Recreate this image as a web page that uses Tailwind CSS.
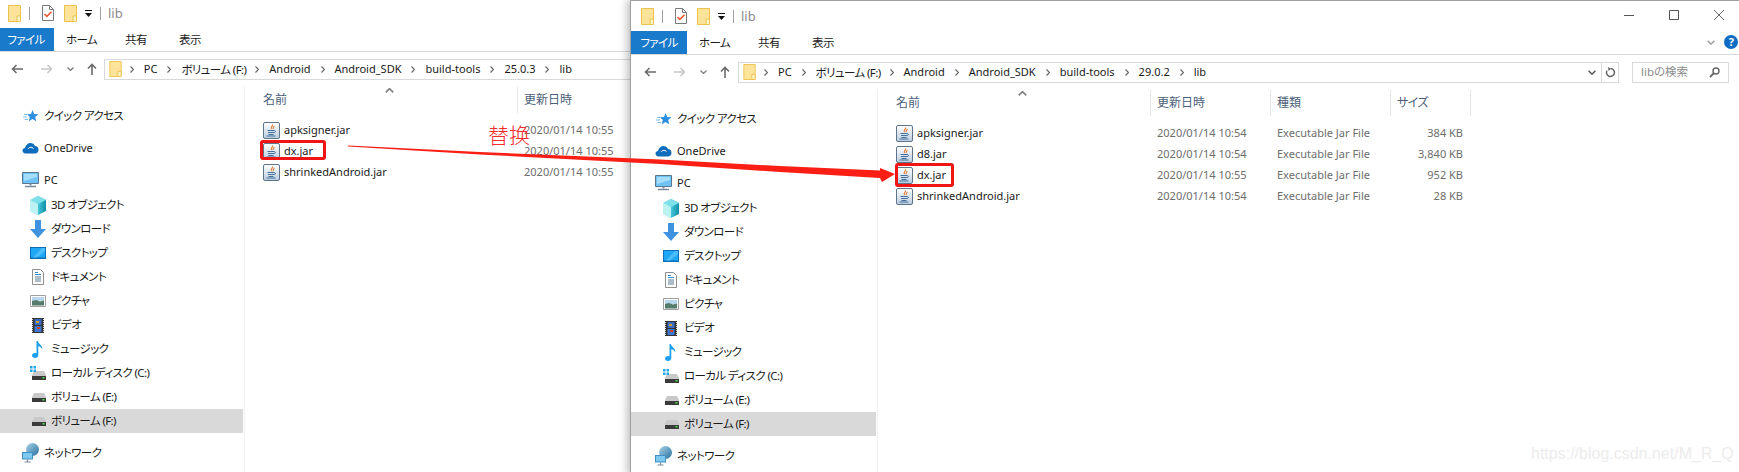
<!DOCTYPE html>
<html lang="ja">
<head>
<meta charset="UTF-8">
<title>lib</title>
<script src="https://cdn.jsdelivr.net/npm/@tailwindcss/browser@4"></script>
</head>
<body class="relative w-[1739px] h-[472px] overflow-hidden bg-white text-[11px] text-[#1a1a1a] font-['Noto_Sans','Noto_Sans_CJK_JP',sans-serif] [font-feature-settings:'palt']">

<!-- shared icons -->
<svg width="0" height="0" class="absolute">
  <defs>
    <linearGradient id="jarbg" x1="0" y1="0" x2="0" y2="1"><stop offset="0" stop-color="#ffffff"/><stop offset="1" stop-color="#b9cde0"/></linearGradient>
    <linearGradient id="cube" x1="0" y1="0" x2="1" y2="0"><stop offset="0" stop-color="#b5f0f2"/><stop offset="0.5" stop-color="#45c6d8"/><stop offset="1" stop-color="#0f8fa6"/></linearGradient>
    <linearGradient id="globe" x1="0" y1="0" x2="1" y2="1"><stop offset="0" stop-color="#a9d4ea"/><stop offset="1" stop-color="#2a6f9e"/></linearGradient>
    <symbol id="folder" viewBox="0 0 13 17"><path d="M.5.5h12v16H.5z" fill="#fde49a" stroke="#ecc24f"/><path d="M9 11h3.5v5.5H9z" fill="#fff3c9" stroke="#ecc24f"/></symbol>
    <symbol id="check" viewBox="0 0 12 16"><path d="M.5.5h7l4 4v11H.5z" fill="#fff" stroke="#7a7a7a"/><path d="M7.5.5v4h4" fill="none" stroke="#7a7a7a"/><path d="M2.5 9l2.4 2.4L9.5 6.8" fill="none" stroke="#e8562a" stroke-width="1.5"/></symbol>
    <symbol id="jar" viewBox="0 0 17 17"><rect x=".5" y=".5" width="16" height="16" rx="1.5" fill="url(#jarbg)" stroke="#5f7488"/><path d="M9.5 2.5c1 1.6-2.500 2.500-1 4.500M11 4c.6 1.200-1.800 1.600-.7 3" fill="none" stroke="#e5792a" stroke-width="1.1"/><path d="M4.500 8.500h7M5 10.500h6c1.800 0 1.800-1.800.3-1.800M5.500 12.500h5M3.500 14h9" fill="none" stroke="#45709c" stroke-width="1"/></symbol>
    <symbol id="star" viewBox="0 0 17 16"><path d="M10.500 2l1.700 4 4.300.3-3.300 2.800 1 4.200-3.700-2.300-3.700 2.300 1-4.200L5 6.300 9 6z" fill="#2d8fe0"/><path d="M1 9h4M2 6.500h3M2.500 11.500H6" stroke="#7cc0ee" stroke-width="1"/></symbol>
    <symbol id="cloud" viewBox="0 0 17 12"><path d="M3.500 11.500C1.500 11.500.5 10 .5 8.500S1.700 6 3 6c.5-3 3-5 5.500-5 2 0 3.700 1.200 4.500 3 2 0 3.500 1.700 3.500 3.700 0 2.200-1.500 3.800-3.500 3.800z" fill="#0f6cbd"/><path d="M6 6.800c1-1.300 2.500-1.800 4-1.300l1.500 1" fill="none" stroke="#fff" stroke-width="1"/></symbol>
    <symbol id="pc" viewBox="0 0 17 16"><path d="M.5.5h16v11H.5z" fill="#6ec3f4" stroke="#59768e"/><path d="M2 2h13v3L2 9z" fill="#a5defa"/><path d="M8.500 11.500v2" stroke="#7a8a98" stroke-width="2"/><path d="M3 14.500h11" stroke="#7a8a98" stroke-width="1.500"/></symbol>
    <symbol id="cube3d" viewBox="0 0 16 19"><path d="M8 0l8 4v11l-8 4-8-4V4z" fill="url(#cube)"/><path d="M8 8L0 4l8-4 8 4z" fill="#7fe0ea"/><path d="M8 8v11l-8-4V4z" fill="#bdf2f3"/></symbol>
    <symbol id="down" viewBox="0 0 16 18"><path d="M5 0h6v9h5l-8 9-8-9h5z" fill="#3f92e0"/></symbol>
    <symbol id="desk" viewBox="0 0 16 12"><path d="M0 0h16v12H0z" fill="#0c6fb8"/><path d="M1 1h14v9.500H1z" fill="#1ea7f5"/><path d="M12 1h3v3l-8 6.500H3z" fill="#4dbdf8"/></symbol>
    <symbol id="doc" viewBox="0 0 12 16"><path d="M.5.500h8l3 3v12H.5z" fill="#fff" stroke="#8f8f8f"/><path d="M3 3.500h3M3 5.500h6" stroke="#2f8ad8"/><path d="M3 8h6M3 10h6M3 12h6" stroke="#5a7c96"/></symbol>
    <symbol id="pic" viewBox="0 0 16 12"><path d="M.5.500h15v11H.5z" fill="#fff" stroke="#a0a0a0"/><path d="M2 2h12v4H2z" fill="#b8d7ee"/><path d="M2 6l4-1 4 1.500 4-1v5H2z" fill="#557b6b"/></symbol>
    <symbol id="video" viewBox="0 0 12 15"><path d="M0 0h12v15H0z" fill="#333"/><path d="M2.500 1h7v6h-7z" fill="#3d6cc4"/><path d="M2.500 8h7v6h-7z" fill="#3e78d0"/><path d="M4 3h3v2H4z" fill="#d0a030"/><path d="M5 9h3v2H5z" fill="#c84030"/><path d="M.5 1v13M11.500 1v13" stroke="#ddd" stroke-dasharray="1 1"/></symbol>
    <symbol id="music" viewBox="0 0 12 17"><path d="M4.500 0h1.300c.5 3 5 4 4.500 8.500-.5-2-2.500-3-4-3.200V14c0 1.700-1.500 3-3.300 3S0 16 0 14.500 1.500 12 3 12c.6 0 1.100.1 1.500.3z" fill="#1ea0ee"/></symbol>
    <symbol id="drive" viewBox="0 0 14 9"><path d="M2 0h10l2 4v5H0V4z" fill="#c9c9c9"/><path d="M0 5h14v4H0z" fill="#3a3a3a"/><path d="M10.500 6h2v1.500h-2z" fill="#4ee04e"/></symbol>
    <symbol id="winpart" viewBox="0 0 6 6"><path d="M0 0h2.500v2.500H0zM3.500 0H6v2.500H3.500zM0 3.500h2.500V6H0zM3.500 3.500H6V6H3.500z" fill="#1ea7e8"/></symbol>
    <symbol id="net" viewBox="0 0 17 20"><circle cx="10.500" cy="6.500" r="6.500" fill="url(#globe)"/><path d="M0 9h11v7.500H0z" fill="#3d8fc4"/><path d="M1 10h9v5.500H1z" fill="#7cc8ee"/><path d="M5.500 16.500v2M2.500 19h6" stroke="#7a8a98" stroke-width="1.2"/></symbol>
    <symbol id="back" viewBox="0 0 12 10"><path d="M12 5H1.500M5.500 1L1.500 5l4 4" fill="none" stroke="currentColor" stroke-width="1.6"/></symbol>
    <symbol id="up" viewBox="0 0 12 12"><path d="M6 12V1.500M2 5.500l4-4 4 4" fill="none" stroke="currentColor" stroke-width="1.6"/></symbol>
    <symbol id="chev" viewBox="0 0 7 4"><path d="M.5.500L3.500 3.500 6.500.500" fill="none" stroke="currentColor" stroke-width="1.3"/></symbol>
    <symbol id="crumb" viewBox="0 0 4 7"><path d="M.5.500l3 3-3 3" fill="none" stroke="#666" stroke-width="1.2"/></symbol>
    <symbol id="qdrop" viewBox="0 0 7 7"><path d="M0 0h7v1H0zM0 3h7L3.500 7z" fill="#111"/></symbol>
  </defs>
</svg>

<!-- left window, clipped by the right one -->
<section class="absolute left-[-3px] top-[-3px] w-[640px] h-[475px] flex flex-col border-l border-t border-[#a0a0a0] bg-white">
  <div class="h-[30px] flex items-center pl-[10px] shrink-0">
    <svg class="w-[13px] h-[17px]"><use href="#folder"/></svg>
    <span class="w-px h-[13px] bg-[#a0a0a0] ml-[8px] mr-[12px]"></span>
    <svg class="w-[12px] h-[16px]"><use href="#check"/></svg>
    <svg class="w-[13px] h-[17px] ml-[10px]"><use href="#folder"/></svg>
    <svg class="w-[7px] h-[7px] ml-[8px]"><use href="#qdrop"/></svg>
    <span class="w-px h-[13px] bg-[#a0a0a0] ml-[8px] mr-[7px]"></span>
    <span class="text-[#8c8c8c] text-[13px] pt-[2px]">lib</span>
  </div>
  <nav class="h-[24px] flex shrink-0 border-b border-[#d9d9d9] text-[11.5px] tracking-[-0.6px]">
    <div class="w-[56px] h-[23px] bg-[#1979ca] text-white flex items-center justify-center">ファイル</div>
    <div class="w-[55px] h-[23px] flex items-center justify-center">ホーム</div>
    <div class="w-[54px] h-[23px] flex items-center justify-center">共有</div>
    <div class="w-[54px] h-[23px] flex items-center justify-center">表示</div>
  </nav>
  <div class="h-[35px] flex items-center shrink-0 pb-px">
    <div class="w-[107px] flex items-center pl-[13px]">
      <svg class="w-[12px] h-[10px] text-[#6b6b6b]"><use href="#back"/></svg>
      <svg class="w-[12px] h-[10px] ml-[18px] text-[#c8c8c8] rotate-180"><use href="#back"/></svg>
      <svg class="w-[7px] h-[4px] ml-[14px] text-[#808080]"><use href="#chev"/></svg>
      <svg class="w-[12px] h-[12px] ml-[12px] text-[#6b6b6b]"><use href="#up"/></svg>
    </div>
    <div class="w-[540px] h-[21px] border border-[#d9d9d9] flex items-center pl-[4px] gap-[10px]">
      <svg class="w-[13px] h-[16px] mr-[-2px]"><use href="#folder"/></svg>
      <svg class="w-[4px] h-[7px]"><use href="#crumb"/></svg><span class="pt-px">PC</span>
      <svg class="w-[4px] h-[7px]"><use href="#crumb"/></svg><span class="pt-px text-[11.5px] tracking-[-0.6px] mr-[-1px]">ボリューム (F:)</span>
      <svg class="w-[4px] h-[7px]"><use href="#crumb"/></svg><span class="pt-px">Android</span>
      <svg class="w-[4px] h-[7px]"><use href="#crumb"/></svg><span class="pt-px">Android_SDK</span>
      <svg class="w-[4px] h-[7px]"><use href="#crumb"/></svg><span class="pt-px">build-tools</span>
      <svg class="w-[4px] h-[7px]"><use href="#crumb"/></svg><span class="pt-px">25.0.3</span>
      <svg class="w-[4px] h-[7px]"><use href="#crumb"/></svg><span class="pt-px">lib</span>
    </div>
  </div>
  <div class="flex-1 flex min-h-0">
    <aside class="w-[247px] shrink-0 border-r border-[#f0f0f0] pt-[17px]">
      <div class="h-[24px] flex items-center pl-[24px] gap-[5px] text-[11.5px] tracking-[-0.6px]"><svg class="w-[17px] h-[16px]"><use href="#star"/></svg>クイック アクセス</div>
      <div class="h-[24px] mt-[8px] flex items-center pl-[24px] gap-[5px]"><svg class="w-[17px] h-[12px]"><use href="#cloud"/></svg>OneDrive</div>
      <div class="h-[24px] mt-[8px] flex items-center pl-[24px] gap-[5px]"><svg class="w-[17px] h-[16px]"><use href="#pc"/></svg>PC</div>
      <div class="h-[24px] mt-px flex items-center pl-[32px] gap-[5px] text-[11.5px] tracking-[-0.6px]"><svg class="w-[16px] h-[19px]"><use href="#cube3d"/></svg>3D オブジェクト</div>
      <div class="h-[24px] flex items-center pl-[32px] gap-[5px] text-[11.5px] tracking-[-0.6px]"><svg class="w-[16px] h-[18px]"><use href="#down"/></svg>ダウンロード</div>
      <div class="h-[24px] flex items-center pl-[32px] gap-[5px] text-[11.5px] tracking-[-0.6px]"><svg class="w-[16px] h-[12px]"><use href="#desk"/></svg>デスクトップ</div>
      <div class="h-[24px] flex items-center pl-[32px] gap-[5px] text-[11.5px] tracking-[-0.6px]"><span class="w-[16px] flex justify-center"><svg class="w-[12px] h-[16px]"><use href="#doc"/></svg></span>ドキュメント</div>
      <div class="h-[24px] flex items-center pl-[32px] gap-[5px] text-[11.5px] tracking-[-0.6px]"><svg class="w-[16px] h-[12px]"><use href="#pic"/></svg>ピクチャ</div>
      <div class="h-[24px] flex items-center pl-[32px] gap-[5px] text-[11.5px] tracking-[-0.6px]"><span class="w-[16px] flex justify-center"><svg class="w-[12px] h-[15px]"><use href="#video"/></svg></span>ビデオ</div>
      <div class="h-[24px] flex items-center pl-[32px] gap-[5px] text-[11.5px] tracking-[-0.6px]"><span class="w-[16px] flex justify-center"><svg class="w-[12px] h-[17px]"><use href="#music"/></svg></span>ミュージック</div>
      <div class="h-[24px] flex items-center pl-[32px] gap-[5px] text-[11.5px] tracking-[-0.6px]"><span class="relative w-[16px] h-[14px] flex items-end justify-end"><svg class="absolute left-0 top-0 w-[6px] h-[6px]"><use href="#winpart"/></svg><svg class="w-[14px] h-[9px]"><use href="#drive"/></svg></span>ローカル ディスク (C:)</div>
      <div class="h-[24px] flex items-center pl-[32px] gap-[5px] text-[11.5px] tracking-[-0.6px]"><span class="w-[16px] flex justify-end"><svg class="w-[14px] h-[9px]"><use href="#drive"/></svg></span>ボリューム (E:)</div>
      <div class="h-[24px] w-[245px] bg-[#d9d9d9] flex items-center pl-[32px] gap-[5px] text-[11.5px] tracking-[-0.6px]"><span class="w-[16px] flex justify-end"><svg class="w-[14px] h-[9px]"><use href="#drive"/></svg></span>ボリューム (F:)</div>
      <div class="h-[24px] mt-[8px] flex items-center pl-[24px] gap-[5px] text-[11.5px] tracking-[-0.6px]"><svg class="w-[17px] h-[20px]"><use href="#net"/></svg>ネットワーク</div>
    </aside>
    <div class="flex-1 min-w-0">
      <div class="relative h-[26px] grid grid-cols-[273px_120px] text-[#4c607a] text-[12px]">
        <svg class="absolute left-[140px] top-[1px] w-[9px] h-[5px] text-[#808080] rotate-180"><use href="#chev"/></svg>
        <div class="flex items-center pl-[18px] border-r border-[#e5e5e5]">名前</div>
        <div class="flex items-center pl-[6px]">更新日時</div>
      </div>
      <div class="pt-[7px] text-[#6d6d6d]">
        <div class="h-[21px] grid grid-cols-[273px_120px] items-center"><div class="flex items-center gap-[4px] pl-[18px] text-[#1a1a1a]"><svg class="w-[17px] h-[17px]"><use href="#jar"/></svg>apksigner.jar</div><div class="pl-[6px]">2020/01/14 10:55</div></div>
        <div class="h-[21px] grid grid-cols-[273px_120px] items-center"><div class="flex items-center gap-[4px] pl-[18px] text-[#1a1a1a]"><svg class="w-[17px] h-[17px]"><use href="#jar"/></svg>dx.jar</div><div class="pl-[6px]">2020/01/14 10:55</div></div>
        <div class="h-[21px] grid grid-cols-[273px_120px] items-center"><div class="flex items-center gap-[4px] pl-[18px] text-[#1a1a1a]"><svg class="w-[17px] h-[17px]"><use href="#jar"/></svg>shrinkedAndroid.jar</div><div class="pl-[6px]">2020/01/14 10:55</div></div>
      </div>
    </div>
  </div>
</section>

<!-- right window -->
<section class="absolute left-[630px] top-0 w-[1109px] h-[475px] flex flex-col border-l border-t border-[#a0a0a0] bg-white shadow-[-3px_0_8px_rgba(0,0,0,0.25)]">
  <div class="relative h-[30px] flex items-center pl-[10px] shrink-0">
    <svg class="w-[13px] h-[17px]"><use href="#folder"/></svg>
    <span class="w-px h-[13px] bg-[#a0a0a0] ml-[8px] mr-[12px]"></span>
    <svg class="w-[12px] h-[16px]"><use href="#check"/></svg>
    <svg class="w-[13px] h-[17px] ml-[10px]"><use href="#folder"/></svg>
    <svg class="w-[7px] h-[7px] ml-[8px]"><use href="#qdrop"/></svg>
    <span class="w-px h-[13px] bg-[#a0a0a0] ml-[8px] mr-[7px]"></span>
    <span class="text-[#8c8c8c] text-[13px] pt-[2px]">lib</span>
    <div class="absolute right-[15px] top-[9px] flex items-center gap-[35px] text-[#555]">
      <svg class="w-[10px] h-[10px]" viewBox="0 0 10 10"><path d="M0 5.500h10" stroke="currentColor"/></svg>
      <svg class="w-[10px] h-[10px]" viewBox="0 0 10 10"><path d="M.5.500h9v9h-9z" fill="none" stroke="currentColor"/></svg>
      <svg class="w-[10px] h-[10px]" viewBox="0 0 10 10"><path d="M0 0l10 10M10 0L0 10" stroke="currentColor" stroke-width=".9"/></svg>
    </div>
  </div>
  <nav class="relative h-[24px] flex shrink-0 border-b border-[#d9d9d9] text-[11.5px] tracking-[-0.6px]">
    <div class="w-[56px] h-[23px] bg-[#1979ca] text-white flex items-center justify-center">ファイル</div>
    <div class="w-[55px] h-[23px] flex items-center justify-center">ホーム</div>
    <div class="w-[54px] h-[23px] flex items-center justify-center">共有</div>
    <div class="w-[54px] h-[23px] flex items-center justify-center">表示</div>
    <div class="absolute right-[1px] top-[4px] flex items-center gap-[9px]">
      <svg class="w-[8px] h-[5px] text-[#a0a0a0]"><use href="#chev"/></svg>
      <span class="w-[14px] h-[14px] rounded-full bg-[#0f6cc4] text-white text-[11px] font-bold flex items-center justify-center">?</span>
    </div>
  </nav>
  <div class="h-[35px] flex items-center shrink-0 pb-px">
    <div class="w-[107px] flex items-center pl-[13px]">
      <svg class="w-[12px] h-[10px] text-[#6b6b6b]"><use href="#back"/></svg>
      <svg class="w-[12px] h-[10px] ml-[18px] text-[#c8c8c8] rotate-180"><use href="#back"/></svg>
      <svg class="w-[7px] h-[4px] ml-[14px] text-[#808080]"><use href="#chev"/></svg>
      <svg class="w-[12px] h-[12px] ml-[12px] text-[#6b6b6b]"><use href="#up"/></svg>
    </div>
    <div class="w-[881px] h-[21px] border border-[#d9d9d9] flex items-center">
      <div class="flex-1 flex items-center pl-[4px] gap-[10px]">
        <svg class="w-[13px] h-[16px] mr-[-2px]"><use href="#folder"/></svg>
        <svg class="w-[4px] h-[7px]"><use href="#crumb"/></svg><span class="pt-px">PC</span>
        <svg class="w-[4px] h-[7px]"><use href="#crumb"/></svg><span class="pt-px text-[11.5px] tracking-[-0.6px] mr-[-1px]">ボリューム (F:)</span>
        <svg class="w-[4px] h-[7px]"><use href="#crumb"/></svg><span class="pt-px">Android</span>
        <svg class="w-[4px] h-[7px]"><use href="#crumb"/></svg><span class="pt-px">Android_SDK</span>
        <svg class="w-[4px] h-[7px]"><use href="#crumb"/></svg><span class="pt-px">build-tools</span>
        <svg class="w-[4px] h-[7px]"><use href="#crumb"/></svg><span class="pt-px">29.0.2</span>
        <svg class="w-[4px] h-[7px]"><use href="#crumb"/></svg><span class="pt-px">lib</span>
      </div>
      <svg class="w-[8px] h-[5px] mr-[5px] text-[#555]"><use href="#chev"/></svg>
      <div class="w-[17px] h-full border-l border-[#d9d9d9] flex items-center justify-center">
        <svg class="w-[11px] h-[11px]" viewBox="0 0 11 11"><path d="M5.500 1.500a4 4 0 1 1-3.500 2" fill="none" stroke="#666" stroke-width="1.5"/><path d="M3 0l3 1.700L3.500 4z" fill="#666"/></svg>
      </div>
    </div>
    <div class="w-[97px] h-[21px] ml-[13px] border border-[#d9d9d9] flex items-center justify-between pl-[8px] pr-[8px] text-[#8c8c8c] text-[11.5px]">
      <span>libの検索</span>
      <svg class="w-[11px] h-[11px]" viewBox="0 0 11 11"><circle cx="7" cy="4" r="3" fill="none" stroke="#666" stroke-width="1.4"/><path d="M5 6l-4 4" stroke="#666" stroke-width="1.8"/></svg>
    </div>
  </div>
  <div class="flex-1 flex min-h-0">
    <aside class="w-[247px] shrink-0 border-r border-[#f0f0f0] pt-[17px]">
      <div class="h-[24px] flex items-center pl-[24px] gap-[5px] text-[11.5px] tracking-[-0.6px]"><svg class="w-[17px] h-[16px]"><use href="#star"/></svg>クイック アクセス</div>
      <div class="h-[24px] mt-[8px] flex items-center pl-[24px] gap-[5px]"><svg class="w-[17px] h-[12px]"><use href="#cloud"/></svg>OneDrive</div>
      <div class="h-[24px] mt-[8px] flex items-center pl-[24px] gap-[5px]"><svg class="w-[17px] h-[16px]"><use href="#pc"/></svg>PC</div>
      <div class="h-[24px] mt-px flex items-center pl-[32px] gap-[5px] text-[11.5px] tracking-[-0.6px]"><svg class="w-[16px] h-[19px]"><use href="#cube3d"/></svg>3D オブジェクト</div>
      <div class="h-[24px] flex items-center pl-[32px] gap-[5px] text-[11.5px] tracking-[-0.6px]"><svg class="w-[16px] h-[18px]"><use href="#down"/></svg>ダウンロード</div>
      <div class="h-[24px] flex items-center pl-[32px] gap-[5px] text-[11.5px] tracking-[-0.6px]"><svg class="w-[16px] h-[12px]"><use href="#desk"/></svg>デスクトップ</div>
      <div class="h-[24px] flex items-center pl-[32px] gap-[5px] text-[11.5px] tracking-[-0.6px]"><span class="w-[16px] flex justify-center"><svg class="w-[12px] h-[16px]"><use href="#doc"/></svg></span>ドキュメント</div>
      <div class="h-[24px] flex items-center pl-[32px] gap-[5px] text-[11.5px] tracking-[-0.6px]"><svg class="w-[16px] h-[12px]"><use href="#pic"/></svg>ピクチャ</div>
      <div class="h-[24px] flex items-center pl-[32px] gap-[5px] text-[11.5px] tracking-[-0.6px]"><span class="w-[16px] flex justify-center"><svg class="w-[12px] h-[15px]"><use href="#video"/></svg></span>ビデオ</div>
      <div class="h-[24px] flex items-center pl-[32px] gap-[5px] text-[11.5px] tracking-[-0.6px]"><span class="w-[16px] flex justify-center"><svg class="w-[12px] h-[17px]"><use href="#music"/></svg></span>ミュージック</div>
      <div class="h-[24px] flex items-center pl-[32px] gap-[5px] text-[11.5px] tracking-[-0.6px]"><span class="relative w-[16px] h-[14px] flex items-end justify-end"><svg class="absolute left-0 top-0 w-[6px] h-[6px]"><use href="#winpart"/></svg><svg class="w-[14px] h-[9px]"><use href="#drive"/></svg></span>ローカル ディスク (C:)</div>
      <div class="h-[24px] flex items-center pl-[32px] gap-[5px] text-[11.5px] tracking-[-0.6px]"><span class="w-[16px] flex justify-end"><svg class="w-[14px] h-[9px]"><use href="#drive"/></svg></span>ボリューム (E:)</div>
      <div class="h-[24px] w-[245px] bg-[#d9d9d9] flex items-center pl-[32px] gap-[5px] text-[11.5px] tracking-[-0.6px]"><span class="w-[16px] flex justify-end"><svg class="w-[14px] h-[9px]"><use href="#drive"/></svg></span>ボリューム (F:)</div>
      <div class="h-[24px] mt-[8px] flex items-center pl-[24px] gap-[5px] text-[11.5px] tracking-[-0.6px]"><svg class="w-[17px] h-[20px]"><use href="#net"/></svg>ネットワーク</div>
    </aside>
    <div class="flex-1 min-w-0">
      <div class="relative h-[26px] grid grid-cols-[273px_120px_120px_80px] text-[#4c607a] text-[12px]">
        <svg class="absolute left-[140px] top-[1px] w-[9px] h-[5px] text-[#808080] rotate-180"><use href="#chev"/></svg>
        <div class="flex items-center pl-[18px] border-r border-[#e5e5e5]">名前</div>
        <div class="flex items-center pl-[6px] border-r border-[#e5e5e5]">更新日時</div>
        <div class="flex items-center pl-[6px] border-r border-[#e5e5e5]">種類</div>
        <div class="flex items-center pl-[6px] border-r border-[#e5e5e5] tracking-[-0.6px]">サイズ</div>
      </div>
      <div class="pt-[7px] text-[#6d6d6d]">
        <div class="h-[21px] grid grid-cols-[273px_120px_120px_72px] items-center"><div class="flex items-center gap-[4px] pl-[18px] text-[#1a1a1a]"><svg class="w-[17px] h-[17px]"><use href="#jar"/></svg>apksigner.jar</div><div class="pl-[6px]">2020/01/14 10:54</div><div class="pl-[6px]">Executable Jar File</div><div class="text-right">384 KB</div></div>
        <div class="h-[21px] grid grid-cols-[273px_120px_120px_72px] items-center"><div class="flex items-center gap-[4px] pl-[18px] text-[#1a1a1a]"><svg class="w-[17px] h-[17px]"><use href="#jar"/></svg>d8.jar</div><div class="pl-[6px]">2020/01/14 10:54</div><div class="pl-[6px]">Executable Jar File</div><div class="text-right">3,840 KB</div></div>
        <div class="h-[21px] grid grid-cols-[273px_120px_120px_72px] items-center"><div class="flex items-center gap-[4px] pl-[18px] text-[#1a1a1a]"><svg class="w-[17px] h-[17px]"><use href="#jar"/></svg>dx.jar</div><div class="pl-[6px]">2020/01/14 10:55</div><div class="pl-[6px]">Executable Jar File</div><div class="text-right">952 KB</div></div>
        <div class="h-[21px] grid grid-cols-[273px_120px_120px_72px] items-center"><div class="flex items-center gap-[4px] pl-[18px] text-[#1a1a1a]"><svg class="w-[17px] h-[17px]"><use href="#jar"/></svg>shrinkedAndroid.jar</div><div class="pl-[6px]">2020/01/14 10:54</div><div class="pl-[6px]">Executable Jar File</div><div class="text-right">28 KB</div></div>
      </div>
    </div>
  </div>
</section>

<!-- red annotations drawn over the windows -->
<div class="absolute left-[260px] top-[140px] w-[66px] h-[20px] border-[3px] border-[#f01414] rounded-[3px]"></div>
<div class="absolute left-[895px] top-[163px] w-[59px] h-[24px] border-[3px] border-[#f01414] rounded-[3px]"></div>
<span class="absolute left-[488px] top-[121px] text-[21px] leading-[28px] font-light text-[#f52a2a]">替换</span>
<svg class="absolute left-0 top-0 w-[1739px] h-[472px] pointer-events-none" viewBox="0 0 1739 472">
  <polygon points="348,145.5 480,152 660,159.5 780,166 880,170.5 880,168 895,174 882,182 880,178 780,172 660,164 480,154.5 348,146.5" fill="#fa1e14"/>
</svg>

<!-- watermark -->
<span class="absolute left-[1531px] top-[444px] text-[16px] leading-[20px] text-[#ececec] font-['Liberation_Sans',sans-serif]">https://blog.csdn.net/M_R_Q</span>

</body>
</html>
